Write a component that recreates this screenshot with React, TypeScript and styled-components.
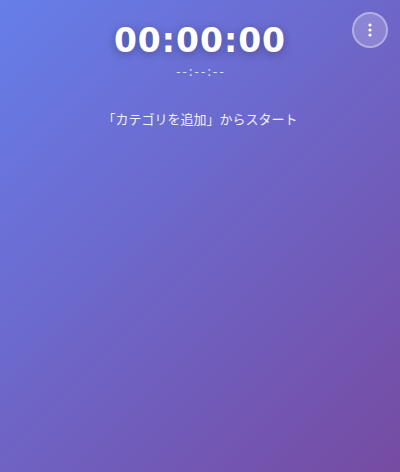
import React from "react";
import styled, { createGlobalStyle } from "styled-components";

const Global = createGlobalStyle`
  html, body { margin: 0; padding: 0; height: 100%; }
  body { font-family: "Noto Sans", "Noto Sans CJK JP", sans-serif; }
  #root { height: 100%; }
`;

const Page = styled.div`
  position: relative;
  width: 400px;
  height: 472px;
  box-sizing: border-box;
  background: linear-gradient(135deg, #667eea 0%, #764ba2 100%);
  color: #fff;
  display: flex;
  flex-direction: column;
  align-items: center;
  padding-top: 15px;
`;

const Clock = styled.div`
  font-family: "DejaVu Sans", sans-serif;
  font-size: 33px;
  font-weight: 700;
  letter-spacing: 1px;
  line-height: 52px;
  text-shadow: 0 2px 10px rgba(0, 0, 0, 0.3);
`;

const SubClock = styled.div`
  font-size: 13px;
  line-height: 14px;
  opacity: 0.8;
  letter-spacing: 2.2px;
  margin-top: -3px;
  padding-left: 2px;
`;

const Hint = styled.div`
  margin-top: 32px;
  font-family: "Noto Sans CJK JP", sans-serif;
  font-size: 13px;
  line-height: 18px;
  opacity: 0.9;
`;

const MenuButton = styled.button`
  position: absolute;
  top: 12px;
  right: 12px;
  width: 36px;
  height: 36px;
  border-radius: 50%;
  border: 2px solid rgba(255, 255, 255, 0.35);
  background: rgba(255, 255, 255, 0.2);
  display: flex;
  align-items: center;
  justify-content: center;
  padding: 0;
  cursor: pointer;
`;

export default function App() {
  return (
    <>
      <Global />
      <Page>
        <Clock>00:00:00</Clock>
        <SubClock>--:--:--</SubClock>
        <Hint>「カテゴリを追加」からスタート</Hint>
        <MenuButton aria-label="menu">
          <svg width="4" height="14" viewBox="0 0 4 14">
            <circle cx="2" cy="2" r="1.6" fill="#fff" />
            <circle cx="2" cy="7" r="1.6" fill="#fff" />
            <circle cx="2" cy="12" r="1.6" fill="#fff" />
          </svg>
        </MenuButton>
      </Page>
    </>
  );
}
